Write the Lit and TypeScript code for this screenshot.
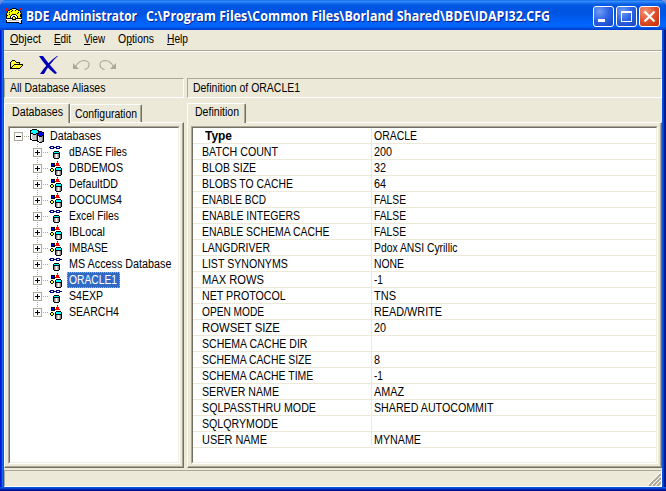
import { LitElement, html, svg, css } from "lit";
import { customElement } from "lit/decorators.js";

const SANS = '"Liberation Sans", Arial, sans-serif';
const TITLE = '"Open Sans", "Noto Sans", sans-serif';
const ctx = document.createElement("canvas").getContext("2d")!;

// Condenses a run of text horizontally so that it takes the given width.
function label(text: string, width: number, kind = "") {
  ctx.font = kind === "title" ? `700 14.5px ${TITLE}` : kind === "bold" ? `700 12px ${SANS}` : `400 12px ${SANS}`;
  const scale = width / ctx.measureText(text.replace("&", "")).width;
  const key = text.indexOf("&");
  const body = key < 0 ? text : html`${text.slice(0, key)}<u>${text[key + 1]}</u>${text.slice(key + 2)}`;
  return html`<span class="label ${kind}" style="width:${width}px"><span class="run" style="transform:scaleX(${scale})">${body}</span></span>`;
}

const PALETTE: Record<string, string> = {
  k: "#000000", w: "#ffffff", g: "#848484", l: "#c6c6c6", c: "#00ffff", b: "#0000ff",
  n: "#000084", r: "#ff0000", y: "#ffff00", o: "#848400", p: "#ffff9c",
};

function pixels(rows: string[]) {
  const w = Math.max(...rows.map((r) => r.length));
  const cells = rows.flatMap((row, y) =>
    [...row].map((ch, x) => (PALETTE[ch] ? svg`<rect x=${x} y=${y} width="1" height="1" fill=${PALETTE[ch]}></rect>` : null)));
  return html`<svg class="px" width=${w} height=${rows.length} viewBox="0 0 ${w} ${rows.length}" shape-rendering="crispEdges">${cells}</svg>`;
}

const ODBC = [
  "..............",
  "..............",
  ".nnnn..nnnn...",
  "nn..nnnn..nnn.",
  ".nnnn..nnnn...",
  "..............",
  "..............",
  ".....kkkkk....",
  "....kccccck...",
  "....kkkkkkk...",
  "....kglwlgk...",
  "....kglwlgk...",
  "....kglwlgk...",
  "....kglwlgk...",
  ".....kkkkk....",
  "..............",
];
const ALIAS = [
  "..............",
  "........r.....",
  "........r.....",
  "..kkkk.rrr....",
  "..kbbk.rrr....",
  "..kbbkrrrrr...",
  "..kkkk........",
  ".......kkkkk..",
  "..kk..kccccck.",
  ".kyyk.kccccck.",
  ".kyyk.kkkkkkk.",
  "..kk..kglwlgk.",
  "......kglwlgk.",
  "......kglwlgk.",
  "......kglwlgk.",
  ".......kkkkk..",
];
const ROOT = [
  "................",
  "...kkkkk........",
  ".kkccccckk......",
  ".kccccccckkkk...",
  ".kccccccckbbbkk.",
  ".kkkccckkkbbbbk.",
  ".kwlkkkgkbbbbbk.",
  ".kwllllgkkbbbkk.",
  ".kwllllgkwkkkgk.",
  ".kwllllgkwlllgk.",
  ".kwllllgkwlllgk.",
  ".kkwlllgkwlllgk.",
  "...kkkkkkwlllgk.",
  "........kkwlgkk.",
  "..........kkk...",
  "................",
];
const APP = [
  "rr....kkkk....rr",
  "rr..kkywwykk..rr",
  "r.kkyykyykyykk.r",
  ".kyyykyyyyyyyyk.",
  ".kykyyywyyyykyk.",
  "kyyyyyyyyyykyyyk",
  "kyykyykkkkyyyykk",
  "kkyyykwwwwkyyykk",
  "kyyykwwkkwwkyykk",
  "kyyykwkyykwkyyyk",
  "kkkkkkkyykkkkkkk",
  "wwwwwwkkkkwwwwww",
  "kwlllllllllllwwk",
  "kwwwwwwwwwwwwwlk",
  "kkkkkkkkkkkkklwk",
  ".............kkk",
];
const FOLDER = [
  "..kkk.........",
  ".kyypk........",
  "kypyypkkkk....",
  "kyypyypyyk....",
  "kypykkkkkkkkk.",
  "kyykyypyypyyk.",
  "kykyypyypyyk..",
  "kkyypyypyyk...",
  "kkkkkkkkkk....",
];

const TREE: [string, number, boolean][] = [
  ["dBASE Files", 58, true], ["DBDEMOS", 54, false], ["DefaultDD", 49, false], ["DOCUMS4", 53, false],
  ["Excel Files", 50, true], ["IBLocal", 36, false], ["IMBASE", 39, false], ["MS Access Database", 103, true],
  ["ORACLE1", 48, false], ["S4EXP", 34, true], ["SEARCH4", 50, false],
];

const ROWS: [string, number, string, number][] = [
  ["Type", 27, "ORACLE", 43], ["BATCH COUNT", 76, "200", 18], ["BLOB SIZE", 54, "32", 12],
  ["BLOBS TO CACHE", 91, "64", 12], ["ENABLE BCD", 64, "FALSE", 32], ["ENABLE INTEGERS", 98, "FALSE", 32],
  ["ENABLE SCHEMA CACHE", 128, "FALSE", 32], ["LANGDRIVER", 68, "Pdox ANSI Cyrillic", 84],
  ["LIST SYNONYMS", 86, "NONE", 30], ["MAX ROWS", 62, "-1", 9], ["NET PROTOCOL", 84, "TNS", 22],
  ["OPEN MODE", 62, "READ/WRITE", 68], ["ROWSET SIZE", 78, "20", 12], ["SCHEMA CACHE DIR", 106, "", 0],
  ["SCHEMA CACHE SIZE", 110, "8", 6], ["SCHEMA CACHE TIME", 112, "-1", 9], ["SERVER NAME", 77, "AMAZ", 30],
  ["SQLPASSTHRU MODE", 114, "SHARED AUTOCOMMIT", 120], ["SQLQRYMODE", 76, "", 0], ["USER NAME", 65, "MYNAME", 47],
];

@customElement("app-root")
export class AppRoot extends LitElement {
  static styles = css`
    :host { display: block; width: 666px; height: 491px; overflow: hidden; background: #6b8fe0; font: 12px/16px "Liberation Sans", Arial, sans-serif; color: #000; }
    * { box-sizing: border-box; }
    svg { display: block; flex: none; }
    .label { display: inline-block; white-space: pre; flex: none; }
    .run { display: inline-block; transform-origin: 0 0; white-space: pre; }
    .bold { font-weight: 700; }
    .title { font: 700 14.5px/20px "Open Sans", "Noto Sans", sans-serif; color: #fff; text-shadow: 1px 1px 0 #0a1f8c; }
    u { text-decoration-thickness: 1px; text-underline-offset: 1px; }
    .window { width: 666px; height: 491px; display: flex; flex-direction: column; border-radius: 7px 7px 0 0; overflow: hidden;
      background: linear-gradient(90deg, #0019cf 0 1px, #0831d9 1px 2px, #166aee 2px 3px, #0855dd 3px 4px, #0855dd 4px 662px, #0855dd 662px 663px, #0441d8 663px 664px, #001ea0 664px 665px, #00138c 665px); }
    .titlebar { height: 30px; flex: none; display: flex; align-items: center; padding: 2px 6px 0 6px;
      background: linear-gradient(180deg, #0058e6 0, #3a93ff 1px, #2a85f7 2px, #0a5fe6 4px, #0055e0 7px, #0054e3 14px, #005ff5 20px, #0066ff 25px, #0060fa 27px, #0046cf 29px, #003dcb 30px); }
    .titlebar .label { margin-left: 4px; height: 20px; }
    .titlebar .label + .label { margin-left: 9px; }
    .controls { margin-left: auto; display: flex; gap: 2px; }
    .client { width: 658px; height: 457px; margin-left: 4px; background: #ece9d8; flex: none; display: flex; flex-direction: column; }
    .menu { height: 20px; display: flex; gap: 13px; padding: 1px 6px 0; flex: none; }
    .menu .label { height: 16px; }
    .rule { height: 2px; flex: none; border-top: 1px solid #aca899; border-bottom: 1px solid #fff; }
    .toolbar { height: 26px; flex: none; display: flex; align-items: center; padding: 0 0 2px 6px; }
    .toolbar .del { margin: 2px 0 0 14px; }
    .toolbar .undo { margin: 2px 0 0 12px; }
    .toolbar .redo { margin: 2px 0 0 9px; }
    .columns { height: 390px; flex: none; display: grid; grid-template-columns: 180px 475px; column-gap: 3px; }
    .column { display: flex; flex-direction: column; }
    .caption { height: 20px; flex: none; border: 1px solid; border-color: #aca899 #fff #fff #aca899; padding: 1px 0 0 5px; }
    .tabs { height: 25px; flex: none; display: flex; align-items: flex-end; padding-top: 5px; position: relative; z-index: 1; margin-bottom: -1px; }
    .tab { height: 18px; border: 1px solid; border-bottom: 0; border-color: #fff #716f64 #fff #fff; border-radius: 2px 2px 0 0; background: #ece9d8; padding: 1px 4px 0; margin-bottom: 1px; box-shadow: inset -1px 0 #aca899; }
    .tab.on { height: 20px; margin-bottom: 0; padding: 0 6px 0 7px; }
    .pane { flex: 1; min-height: 0; border: 1px solid; border-color: #fff #716f64 #716f64 #fff; box-shadow: inset -1px -1px #aca899; padding: 3px; }
    .well { height: 338px; border: 1px solid; border-color: #aca899 #fff #fff #aca899; }
    .inner { height: 336px; border: 1px solid; border-color: #716f64 #f1efe2 #f1efe2 #716f64; background: #fff; overflow: hidden; }
    .node { height: 16px; display: flex; align-items: center; }
    .node.root { padding-left: 4px; }
    .child { padding-left: 23px; }
    .node .dots { width: 7px; height: 1px; flex: none; background: repeating-linear-gradient(90deg, transparent 0 1px, #aca899 1px 2px); }
    .root .dots { width: 6px; }
    .name { height: 16px; padding: 0 2px; margin-left: 4px; }
    .root .name { margin-left: 3px; }
    .sel { background: #316ac5; color: #fff; outline: 1px dotted #e5a048; outline-offset: -1px; width: 53px; }
    .row { height: 16px; display: grid; grid-template-columns: 179px 1fr; border-bottom: 1px solid #ece9d8; }
    .cell { padding-left: 9px; height: 15px; }
    .cell:first-child { border-right: 1px solid #ece9d8; }
    .cell + .cell { padding-left: 2px; }
    .cell .bold { margin-left: 3px; }
    .status { margin-top: 2px; height: 17px; border: 1px solid; border-color: #aca899 #fff #fff #aca899; display: flex; justify-content: flex-end; align-items: flex-end; flex: none; }
    .bottom { height: 4px; flex: none; background: linear-gradient(180deg, #0855dd 0 1px, #0441d8 1px 2px, #001ea0 2px 3px, #00138c 3px); }
  `;

  private control(kind: string) {
    const close = kind === "close";
    const glyph = kind === "min" ? svg`<rect x="5" y="13" width="7" height="3" fill="#fff"></rect>`
      : kind === "max" ? svg`<path d="M5 6.5h11M5.5 5v11M15.5 5v11M5 15.5h11M5 5.5h11" stroke="#fff" fill="none"></path>`
      : svg`<path d="M5.5 5.5l10 10M15.5 5.5l-10 10" stroke="#fff" stroke-width="2.2" fill="none"></path>`;
    return html`<svg width="21" height="21" viewBox="0 0 21 21">
      <defs><radialGradient id=${kind} cx="0.3" cy="0.25" r="0.95">
        <stop offset="0" stop-color=${close ? "#f09678" : "#6f9cf5"}></stop>
        <stop offset="0.5" stop-color=${close ? "#e2512c" : "#2d62e4"}></stop>
        <stop offset="1" stop-color=${close ? "#c23008" : "#1747c4"}></stop>
      </radialGradient></defs>
      <rect x="0.5" y="0.5" width="20" height="20" rx="2.5" fill="url(#${kind})" stroke="#fff"></rect>${glyph}</svg>`;
  }

  private expander() {
    return html`<svg width="9" height="9" shape-rendering="crispEdges"><rect x="0.5" y="0.5" width="8" height="8" fill="#fff" stroke="#aca899"></rect>
      <path d="M2 4.5h5" stroke="#000"></path></svg>`;
  }

  private branch(last: boolean) {
    return html`<svg width="9" height="16" shape-rendering="crispEdges">
      <path d=${last ? "M4.5 0v4" : "M4.5 0v16"} stroke="#aca899" stroke-dasharray="1 1"></path>
      <rect x="0.5" y="4.5" width="8" height="8" fill="#fff" stroke="#aca899"></rect><path d="M2 8.5h5M4.5 6v5" stroke="#000"></path></svg>`;
  }

  private arc(cls: string, flip: boolean) {
    return html`<svg class=${cls} width="18" height="12" viewBox="0 0 18 12">
      <g transform=${flip ? "translate(18 0) scale(-1 1)" : ""}><path d="M1 4v6h6z" fill="#aca899"></path>
      <path d="M3.5 7.5Q7 1.5 12 1.5Q17 2 17 5.5Q17 9.5 12.5 10.5" fill="none" stroke="#aca899" stroke-width="1.1"></path></g></svg>`;
  }

  render() {
    return html`<div class="window">
      <div class="titlebar">${pixels(APP)}${label("BDE Administrator", 111, "title")}
        ${label("C:\\Program Files\\Common Files\\Borland Shared\\BDE\\IDAPI32.CFG", 404, "title")}
        <div class="controls">${this.control("min")}${this.control("max")}${this.control("close")}</div></div>
      <div class="client">
        <div class="menu">${label("&Object", 31)}${label("&Edit", 17)}${label("&View", 21)}${label("O&ptions", 36)}${label("&Help", 21)}</div>
        <div class="rule"></div>
        <div class="toolbar">${pixels(FOLDER)}
          <svg class="del" width="22" height="20" viewBox="0 0 22 20"><path d="M1 1h4Q10 8 19 18l-2 1Q8 12 1 1zM20 1Q12 8 6 19H2Q9 8 19 1z" fill="#0000b8"></path></svg>
          ${this.arc("undo", false)}${this.arc("redo", true)}</div>
        <div class="columns">
          <div class="column">
            <div class="caption">${label("All Database Aliases", 96)}</div>
            <div class="tabs"><div class="tab on">${label("Databases", 51)}</div><div class="tab">${label("Configuration", 62)}</div></div>
            <div class="pane"><div class="well"><div class="inner">
              <div class="node root">${this.expander()}<i class="dots"></i>${pixels(ROOT)}<div class="name">${label("Databases", 51)}</div></div>
              ${TREE.map(([t, w, odbc], i) => html`<div class="node child">${this.branch(i === TREE.length - 1)}<i class="dots"></i>${pixels(odbc ? ODBC : ALIAS)}
                <div class="name ${t === "ORACLE1" ? "sel" : ""}">${label(t, w)}</div></div>`)}
            </div></div></div>
          </div>
          <div class="column">
            <div class="caption">${label("Definition of ORACLE1", 107)}</div>
            <div class="tabs"><div class="tab on">${label("Definition", 44)}</div></div>
            <div class="pane"><div class="well"><div class="inner">
              ${ROWS.map(([n, nw, v, vw], i) => html`<div class="row"><div class="cell">${label(n, nw, i ? "" : "bold")}</div><div class="cell">${v ? label(v, vw) : null}</div></div>`)}
            </div></div></div>
          </div>
        </div>
        <div class="status"><svg width="13" height="13"><path d="M1 13L13 1M5 13L13 5M9 13L13 9" stroke="#aca899" stroke-width="2"></path><path d="M0 12L12 0M4 12L13 3M8 12L13 7" stroke="#fff"></path></svg></div>
      </div>
      <div class="bottom"></div>
    </div>`;
  }
}
